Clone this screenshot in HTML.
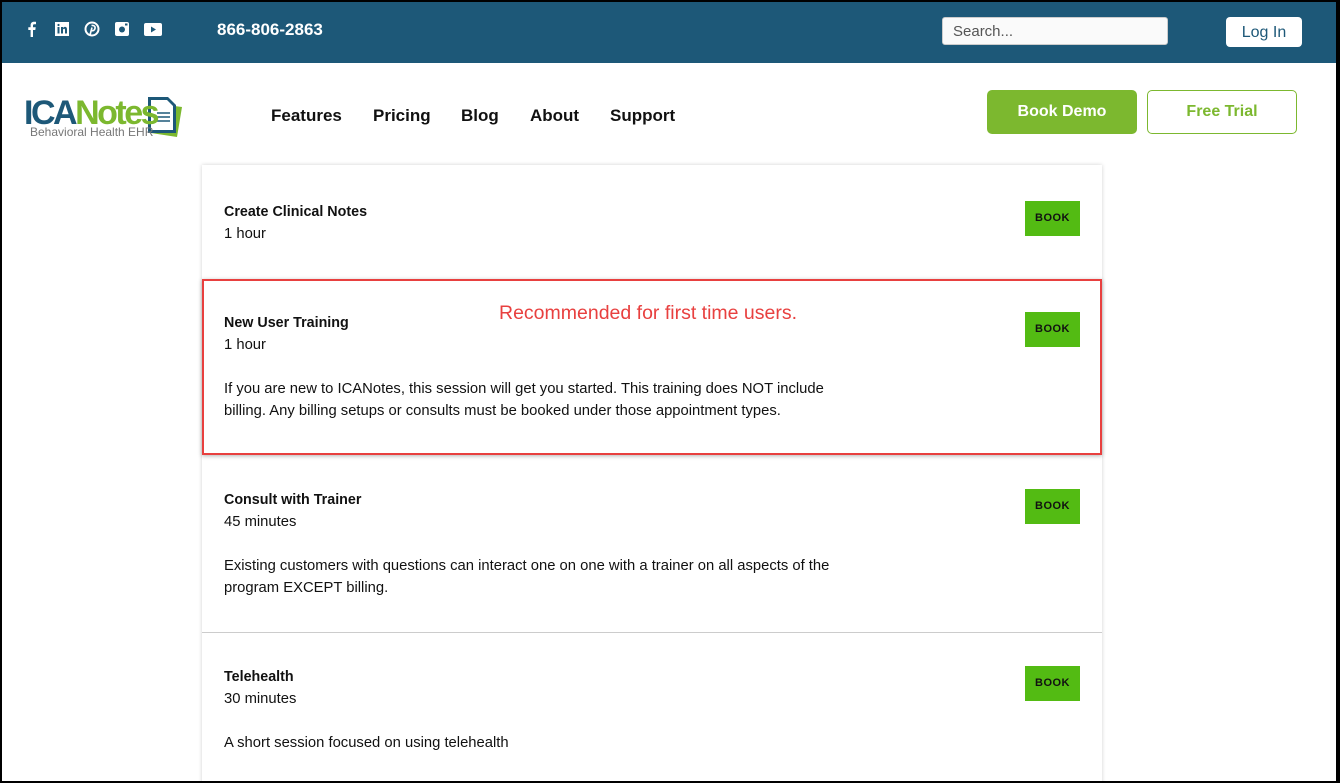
<!DOCTYPE html>
<html><head><style>
*{margin:0;padding:0;box-sizing:border-box}
body{width:1340px;height:783px;overflow:hidden;background:#000;font-family:"Liberation Sans",sans-serif}
#frame{position:absolute;left:2px;top:2px;width:1334px;height:779px;background:#fff;overflow:hidden}
#top{position:absolute;left:0;top:0;width:1334px;height:61px;background:#1d5878}
.ic{position:absolute;top:19px;width:16px;height:16px;color:#fff}
#phone{position:absolute;left:215px;top:18px;color:#fff;font-weight:bold;font-size:17px}
#search{position:absolute;left:940px;top:15px;width:226px;height:28px;background:#fafafa;border:1px solid #ccc;border-radius:3px;color:#555;font-size:15px;padding:5px 10px}
#login{position:absolute;left:1224px;top:15px;width:76px;height:30px;background:#fff;border-radius:4px;color:#1d5878;font-size:16px;text-align:center;line-height:32px}
.nav{position:absolute;top:104px;font-size:17px;font-weight:bold;color:#111}
.btn{position:absolute;top:88px;width:150px;height:44px;border-radius:5px;font-weight:bold;font-size:16px;text-align:center;line-height:44px}
#card{position:absolute;left:200px;top:163px;width:900px;height:640px;background:#fff;box-shadow:0 0 4px rgba(0,0,0,.18)}
.it{position:absolute;left:22px;font-size:14.8px;color:#111;line-height:22px}
.it b{font-weight:bold;font-size:14.3px}
.bk{position:absolute;left:823px;width:55px;height:35px;background:#53bb13;color:#111;font-size:11px;font-weight:bold;letter-spacing:.5px;text-align:center;line-height:35px}
</style></head><body><div id="frame">
<div id="top">
<svg class="ic" style="left:22px" viewBox="0 0 16 16"><path d="M9 16V9h2.3l.4-2.7H9V4.6c0-.8.3-1.3 1.4-1.3H12V.9C11.6.8 10.8.8 10 .8 8 .8 6.6 2 6.6 4.2v2.1H4.3V9h2.3v7z" fill="#fff"/></svg>
<svg class="ic" style="left:52px" viewBox="0 0 16 16"><rect x="1" y="1" width="14" height="14" fill="#fff"/><rect x="3.5" y="6" width="2" height="6.5" fill="#1d5878"/><circle cx="4.5" cy="4" r="1.1" fill="#1d5878"/><path d="M7 6h2v1c.5-.8 1.3-1.1 2-1.1 1.5 0 2 1 2 2.6v4h-2V9c0-.8-.2-1.3-.9-1.3S9 8.2 9 9v3.5H7z" fill="#1d5878"/></svg>
<svg class="ic" style="left:82px" viewBox="0 0 16 16"><circle cx="8" cy="8" r="6.5" fill="none" stroke="#fff" stroke-width="2"/><path d="M7.5 4.5c2.5-.5 4 1 3.5 3s-2 2.5-3 2M8 6.5L6 14" stroke="#fff" stroke-width="1.6" fill="none"/></svg>
<svg class="ic" style="left:112px" viewBox="0 0 16 16"><rect x="1" y="1" width="14" height="14" rx="2" fill="#fff"/><circle cx="8" cy="8.5" r="3" fill="#1d5878"/><rect x="11" y="2.5" width="2.5" height="2" fill="#1d5878"/></svg>
<svg class="ic" style="left:142px;width:18px" viewBox="0 0 18 16"><rect x="0" y="2" width="18" height="13" rx="2" fill="#fff"/><path d="M7 5.5v6l5-3z" fill="#1d5878"/></svg>
<div id="phone">866-806-2863</div>
<div id="search">Search...</div>
<div id="login">Log In</div>
</div>
<svg style="position:absolute;left:138px;top:95px" width="44" height="44" viewBox="0 0 44 44"><path d="M12 6l30 4-5 30-26-4z" fill="#7cb82f"/><path d="M8 0h20l8 8v28H8z" fill="#1d5878"/><path d="M11 3h16l6 6v24H11z" fill="#fff"/><path d="M17 16h13M17 20h13M17 24h13" stroke="#1d5878" stroke-width="1.5"/></svg>
<div style="position:absolute;left:22px;top:94px;font-size:34px;font-weight:bold;letter-spacing:-2.5px;line-height:34px"><span style="color:#1d5878">ICA</span><span style="color:#7cb82f">Notes</span></div>
<div style="position:absolute;left:28px;top:123px;font-size:12px;color:#777">Behavioral Health EHR</div>
<div class="nav" style="left:269px">Features</div>
<div class="nav" style="left:371px">Pricing</div>
<div class="nav" style="left:459px">Blog</div>
<div class="nav" style="left:528px">About</div>
<div class="nav" style="left:608px">Support</div>
<div class="btn" style="left:985px;background:#7cb82f;color:#fff">Book Demo</div>
<div class="btn" style="left:1145px;border:1px solid #7cb82f;color:#7cb82f;line-height:42px">Free Trial</div>
<div id="card">
<div class="it" style="top:36px"><b>Create Clinical Notes</b><br>1 hour</div>
<div class="bk" style="top:36px">BOOK</div>
<div class="it" style="top:147px"><b>New User Training</b><br>1 hour<br><div style="height:22px"></div>If you are new to ICANotes, this session will get you started. This training does NOT include<br>billing. Any billing setups or consults must be booked under those appointment types.</div>
<div class="bk" style="top:147px">BOOK</div>
<div style="position:absolute;left:297px;top:137px;color:#e8403f;font-size:19.5px">Recommended for first time users.</div>
<div style="position:absolute;left:0;top:114px;width:900px;height:176px;border:2px solid #e8403f;box-shadow:0 1px 4px rgba(0,0,0,.3)"></div>
<div class="it" style="top:324px"><b>Consult with Trainer</b><br>45 minutes<br><div style="height:22px"></div>Existing customers with questions can interact one on one with a trainer on all aspects of the<br>program EXCEPT billing.</div>
<div class="bk" style="top:324px">BOOK</div>
<div style="position:absolute;left:0;top:467px;width:900px;height:1px;background:#ccc"></div>
<div class="it" style="top:501px"><b>Telehealth</b><br>30 minutes<br><div style="height:22px"></div>A short session focused on using telehealth</div>
<div class="bk" style="top:501px">BOOK</div>
</div>
</div></body></html>
